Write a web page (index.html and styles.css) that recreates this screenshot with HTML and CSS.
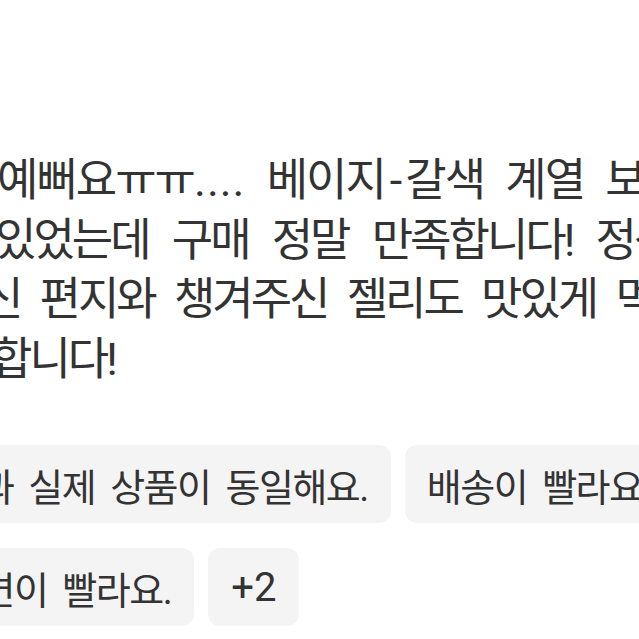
FILE: index.html
```html
<!DOCTYPE html>
<html lang="ko">
<head>
  <meta charset="UTF-8">
  <meta name="viewport" content="width=device-width, initial-scale=1.0">
  <title>리뷰</title>
  <link rel="stylesheet" href="styles.css">
</head>
<body>
  <div class="review">
    <!-- Review text (justified lines, cropped view) -->
    <div class="review-text">
      <div class="line line-1">예뻐요ㅠㅠ<span class="dots">....</span> 베이지<span class="dash">-</span>갈색 계열 보고</div>
      <div class="line line-2">있었는데 구매 정말 만족합니다! 정성</div>
      <div class="line line-3">신 편지와 챙겨주신 젤리도 맛있게 먹</div>
      <div class="line line-4">합니다!</div>
    </div>

    <!-- Review tags -->
    <div class="tags">
      <div class="tag-row tag-row-1">
        <span class="tag">사진과 실제 상품이 동일해요.</span>
        <span class="tag">배송이 빨라요.</span>
      </div>
      <div class="tag-row tag-row-2">
        <span class="tag">답변이 빨라요.</span>
        <span class="tag tag-more">+2</span>
      </div>
    </div>
  </div>
</body>
</html>
```

FILE: styles.css
```css
body {
  margin: 0;
  padding: 0;
  background: #fff;
  color: #333;
  font-family: Roboto, "Noto Sans CJK KR", sans-serif;
  overflow: hidden;
}
.review {
  width: 639px;
  height: 639px;
  overflow: hidden;
  padding-top: 151px;
  box-sizing: border-box;
}
.review-text {
  font-size: 45px;
  line-height: 59.5px;
  letter-spacing: -3px;
  word-spacing: 12px;
}
.line {
  white-space: nowrap;
}
/* each line is justified in the original, so word gaps differ */
.line-1 { margin-left: -3px; letter-spacing: -2px; word-spacing: 12px; }
.line-2 { margin-left: -5px; word-spacing: 15px; }
.line-3 { margin-left: -18px; word-spacing: 11px; }
.line-4 { margin-left: -9px; }
.dots { letter-spacing: 1px; }
.dash { margin: 0 5px; }

.tags {
  margin-top: 56px;
  display: flex;
  flex-direction: column;
  gap: 25px;
}
.tag-row {
  display: flex;
  gap: 14px;
  white-space: nowrap;
}
.tag-row-1 { margin-left: -109px; }
.tag-row-2 { margin-left: -75px; }
.tag {
  display: flex;
  align-items: center;
  height: 78px;
  padding: 0 23px 0 22px;
  background: #f4f4f4;
  border-radius: 12px;
  font-size: 38px;
  letter-spacing: -1.5px;
  word-spacing: 7px;
  color: #333;
}
.tag-more {
  padding: 0 23px;
  font-size: 40px;
  letter-spacing: 0;
}
```
